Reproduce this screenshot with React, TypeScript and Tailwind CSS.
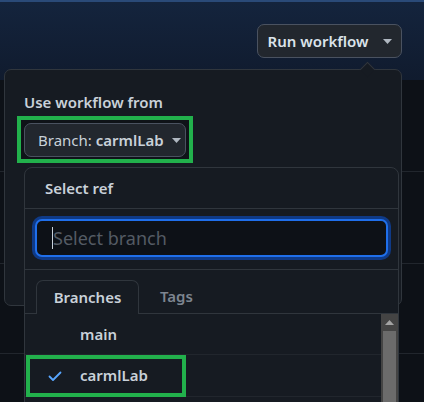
import React from "react";

const FONT = { fontFamily: '"Segoe UI", "Noto Sans", sans-serif' };

function Caret({ className = "" }: { className?: string }) {
  return (
    <svg width="9" height="5" viewBox="0 0 9 5" className={className}>
      <polygon points="0,0 9,0 4.5,5" fill="currentColor" />
    </svg>
  );
}

export default function App() {
  return (
    <div className="relative w-[424px] h-[402px] overflow-hidden bg-[#0d1117]" style={FONT}>
      {/* page behind */}
      <div className="flex flex-col">
        <div className="h-[80px] border-t-2 border-[#2a4a78] bg-gradient-to-b from-[#14243d] to-[#101b2e]" />
        <div className="h-[92px] border-b border-[#21262d]" />
        <div className="h-[92px] border-b border-[#21262d]" />
        <div className="h-[90px] border-b border-[#21262d]" />
      </div>

      {/* Run workflow button */}
      <button className="absolute left-[257px] top-[24px] w-[145px] h-[34px] flex items-center justify-center gap-[14px] rounded-[7px] border border-[#4a5260] bg-[#22272e] text-[#dbe3ea] text-[15px] font-semibold">
        <span>Run workflow</span>
        <Caret className="text-[#b0b8c1]" />
      </button>

      {/* outer popover */}
      <div className="absolute left-[4px] top-[69px] w-[398px] h-[237px] rounded-[7px] border border-[#30363d] bg-[#161b22]">
        <div className="absolute -top-[6px] left-[357px] w-[11px] h-[11px] rotate-45 border-l border-t border-[#30363d] bg-[#161b22]" />
        <div className="flex flex-col items-start pl-[19px] pt-[22px]">
          <div className="text-[15px] leading-[20px] font-semibold text-[#c9d1d9]">Use workflow from</div>
          <div className="mt-[4px] -ml-[7px] border-[4px] border-[#22b14c] px-[3px] pt-[3px] pb-[2px] bg-[#0f1318]">
            <button className="h-[34px] w-[162px] flex items-center gap-[8px] pl-[13px] rounded-[7px] border border-[#4a5260] bg-[#22272e] text-[15px] text-[#c9d1d9]">
              <span>
                Branch: <span className="font-semibold">carmlLab</span>
              </span>
              <Caret className="text-[#b0b8c1]" />
            </button>
          </div>
        </div>
      </div>

      {/* select ref dropdown */}
      <div className="absolute left-[24px] top-[167px] w-[375px] h-[260px] rounded-t-[8px] border border-[#30363d] bg-[#161b22] flex flex-col">
        <div className="h-[41px] flex items-center pl-[20px] border-b border-[#30363d] text-[15px] font-semibold text-[#c9d1d9]">
          Select ref
        </div>
        <div className="h-[61px] px-[10px] pt-[10px] border-b border-[#30363d]">
          <div className="h-[38px] flex items-center rounded-[7px] border-2 border-[#1f6feb] ring-[3px] ring-[#0f3a86] bg-[#0d1117] pl-[15px]">
            <span className="w-px h-[22px] bg-[#c9d1d9]" />
            <span className="text-[18px] text-[#545b64]">Select branch</span>
          </div>
        </div>
        <div className="h-[44px] flex items-end pl-[11px] border-b border-[#30363d] relative">
          <div className="relative -mb-px h-[34px] w-[103px] flex items-center justify-center rounded-t-[7px] border border-b-0 border-[#30363d] bg-[#161b22] text-[15px] font-semibold text-[#c9d1d9]">
            Branches
          </div>
          <div className="h-[34px] flex items-center pl-[21px] text-[15px] font-semibold text-[#7d8590]">Tags</div>
        </div>
        <div className="flex flex-1">
          <div className="flex-1 flex flex-col">
            <div className="h-[41px] flex items-center pl-[55px] border-b border-[#21262d] text-[15px] font-semibold text-[#c9d1d9]">
              main
            </div>
            <div className="relative h-[42px] flex items-center border-b border-[#21262d] text-[15px] font-semibold text-[#c9d1d9]">
              <div className="absolute left-[1px] top-0 w-[160px] h-[42px] border-[4px] border-[#22b14c]" />
              <svg width="16" height="16" viewBox="0 0 16 16" className="ml-[22px] text-[#58a6ff]">
                <path d="M2.5 8.5 L6 12 L13.5 4.5" stroke="currentColor" strokeWidth="1.8" fill="none" strokeLinecap="round" strokeLinejoin="round" />
              </svg>
              <span className="ml-[17px]">carmlLab</span>
            </div>
          </div>
          <div className="w-[17px] bg-[#444444] flex flex-col items-center">
            <div className="h-[17px] flex items-center justify-center">
              <svg width="9" height="5" viewBox="0 0 9 5">
                <polygon points="4.5,0 9,5 0,5" fill="#a3a3a3" />
              </svg>
            </div>
            <div className="w-[13px] flex-1 bg-[#6b6b6b]" />
          </div>
        </div>
      </div>
    </div>
  );
}
